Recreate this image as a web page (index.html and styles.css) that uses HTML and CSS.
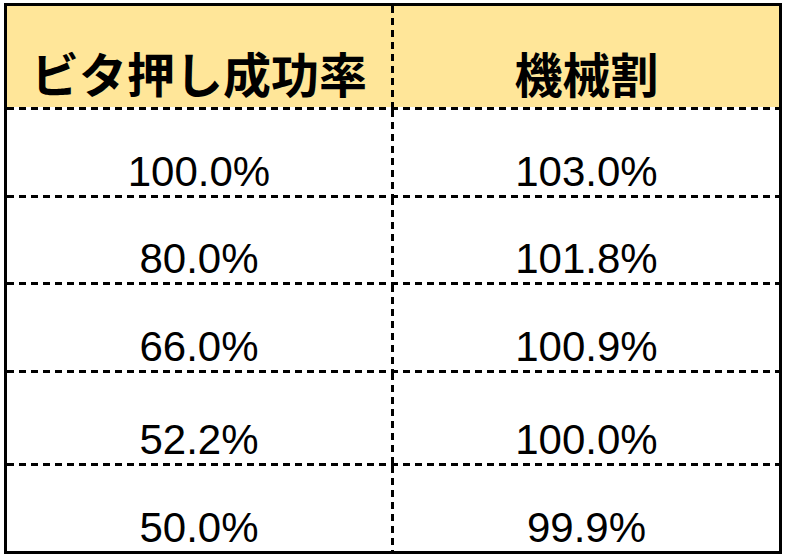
FILE: index.html
```html
<!DOCTYPE html>
<html lang="ja">
<head>
<meta charset="utf-8">
<title>ビタ押し成功率と機械割</title>
<link rel="stylesheet" href="styles.css">
</head>
<body>
<div class="sheet">
  <div class="table">
    <div class="row head">
      <div class="cell c1">ビタ押し成功率</div>
      <div class="cell">機械割</div>
    </div>
    <div class="row r1">
      <div class="cell c1">100.0%</div>
      <div class="cell">103.0%</div>
    </div>
    <div class="row r2">
      <div class="cell c1">80.0%</div>
      <div class="cell">101.8%</div>
    </div>
    <div class="row r3">
      <div class="cell c1">66.0%</div>
      <div class="cell">100.9%</div>
    </div>
    <div class="row r4">
      <div class="cell c1">52.2%</div>
      <div class="cell">100.0%</div>
    </div>
    <div class="row r5 last">
      <div class="cell c1">50.0%</div>
      <div class="cell">99.9%</div>
    </div>
  </div>
</div>
</body>
</html>
```
FILE: styles.css
```css
html, body {
  margin: 0;
  padding: 0;
  background: #fff;
}

.sheet {
  padding: 3px 0 0 4px;
}

.table {
  width: 778px;
  box-sizing: border-box;
  border: 3px solid #000;
  font-family: "Liberation Sans", Arial, sans-serif;
  font-size: 42px;
  line-height: 1;
  color: #000;
}

.row {
  display: grid;
  grid-template-columns: 387px 385px;
  box-sizing: border-box;
  background: repeating-linear-gradient(90deg, #000 0 7px, transparent 7px 12px) left bottom / 100% 3px no-repeat;
}

.row.last {
  background: none;
}

.row.head {
  background:
    repeating-linear-gradient(90deg, #000 0 7px, transparent 7px 12px) left bottom / 100% 3px no-repeat,
    linear-gradient(#ffe699, #ffe699) left top / 100% calc(100% - 3px) no-repeat;
  font-family: "Noto Sans CJK JP", sans-serif;
  font-weight: 700;
  font-size: 48px;
  height: 104px;
}

.r1 { height: 88px; }
.r2 { height: 87px; }
.r3 { height: 88px; }
.r4 { height: 93px; }
.r5 { height: 85px; }

.cell {
  display: flex;
  align-items: flex-end;
  justify-content: center;
  box-sizing: border-box;
  padding-bottom: 5px;
  white-space: nowrap;
}

.head .cell {
  padding-bottom: 14px;
}

.last .cell {
  padding-bottom: 2px;
}

.c1 {
  padding-right: 3px;
  background: repeating-linear-gradient(180deg, #000 0 7px, transparent 7px 12px) right top / 3px 100% no-repeat;
}
```
